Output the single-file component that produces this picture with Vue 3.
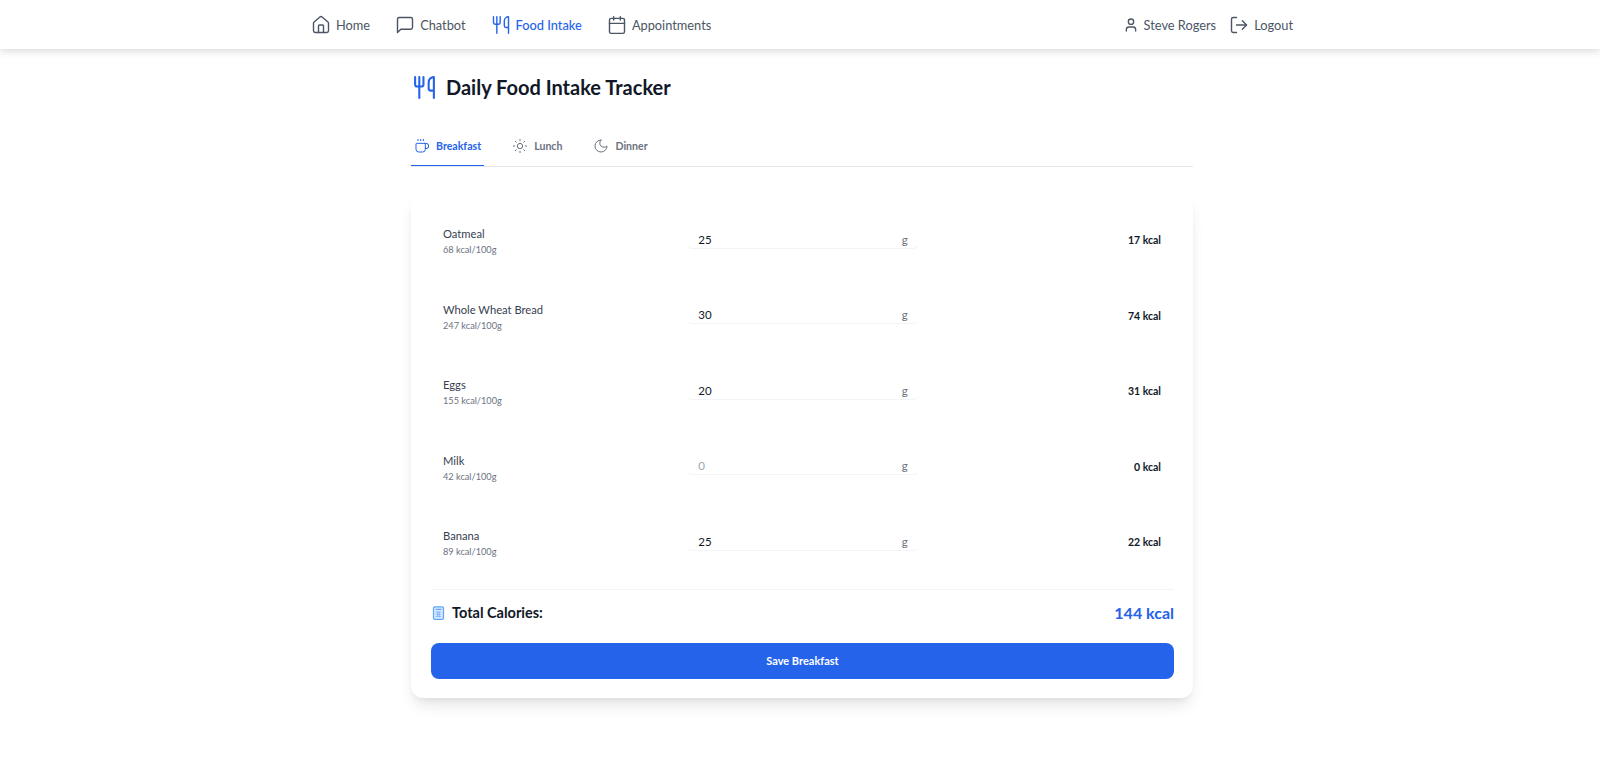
<template>
  <div class="page">
    <header class="navbar">
      <nav class="nav-inner">
        <div class="nav-links">
          <a v-for="link in links" :key="link.label" class="nav-link" :class="{ active: link.active }">
            <svg class="nav-icon" viewBox="0 0 24 24" fill="none" stroke="currentColor" stroke-width="2" stroke-linecap="round" stroke-linejoin="round">
              <path v-for="d in link.paths" :key="d" :d="d" />
            </svg>
            <span>{{ link.label }}</span>
          </a>
        </div>
        <div class="nav-user">
          <span class="user-name">
            <svg class="user-icon" viewBox="0 0 24 24" fill="none" stroke="currentColor" stroke-width="2" stroke-linecap="round" stroke-linejoin="round">
              <path d="M19 21v-2a4 4 0 0 0-4-4H9a4 4 0 0 0-4 4v2" />
              <circle cx="12" cy="7" r="4" />
            </svg>
            Steve Rogers
          </span>
          <a class="logout">
            <svg class="nav-icon" viewBox="0 0 24 24" fill="none" stroke="currentColor" stroke-width="2" stroke-linecap="round" stroke-linejoin="round">
              <path d="M9 21H5a2 2 0 0 1-2-2V5a2 2 0 0 1 2-2h4" />
              <path d="M16 17l5-5-5-5" />
              <path d="M21 12H9" />
            </svg>
            Logout
          </a>
        </div>
      </nav>
    </header>

    <main class="content">
      <div class="title-row">
        <svg class="title-icon" viewBox="0 0 24 24" fill="none" stroke="currentColor" stroke-width="2" stroke-linecap="round" stroke-linejoin="round">
          <path v-for="d in forkPaths" :key="d" :d="d" />
        </svg>
        <h1>Daily Food Intake Tracker</h1>
      </div>

      <div class="tabs">
        <button v-for="tab in tabs" :key="tab.label" type="button" class="tab" :class="{ active: tab.active }">
          <svg class="tab-icon" viewBox="0 0 24 24" fill="none" stroke="currentColor" stroke-width="2" stroke-linecap="round" stroke-linejoin="round">
            <path v-for="d in tab.paths" :key="d" :d="d" />
          </svg>
          {{ tab.label }}
        </button>
      </div>

      <section class="card">
        <div class="foods">
          <div v-for="food in foods" :key="food.name" class="food-row">
            <div class="food-info">
              <div class="food-name">{{ food.name }}</div>
              <div class="food-rate">{{ food.rate }} kcal/100g</div>
            </div>
            <div class="amount">
              <input class="amount-input" type="number" :value="food.grams" placeholder="0" />
              <span class="unit">g</span>
            </div>
            <div class="food-kcal">{{ kcal(food) }} kcal</div>
          </div>
        </div>

        <div class="total-row">
          <div class="total-label">
            <svg class="calc-icon" viewBox="0 0 24 24" fill="#dbeafe" stroke="currentColor" stroke-width="2" stroke-linecap="round" stroke-linejoin="round">
              <rect x="4" y="2" width="16" height="20" rx="2" />
              <path d="M8 6h8" fill="none" />
              <path d="M8 10.5h8M8 14h8M8 17.5h8M10.7 10.5v7M13.3 10.5v7" fill="none" stroke-width="1" />
            </svg>
            Total Calories:
          </div>
          <div class="total-value">144 kcal</div>
        </div>

        <button type="button" class="save">Save Breakfast</button>
      </section>
    </main>
  </div>
</template>

<script setup>
const forkPaths = [
  'M3 2v7c0 1.1.9 2 2 2h4a2 2 0 0 0 2-2V2',
  'M7 2v20',
  'M21 15V2a5 5 0 0 0-5 5v6c0 1.1.9 2 2 2h3Zm0 0v7',
]

const links = [
  { label: 'Home', paths: ['M15 21v-8a1 1 0 0 0-1-1h-4a1 1 0 0 0-1 1v8', 'M3 10a2 2 0 0 1 .709-1.528l7-5.999a2 2 0 0 1 2.582 0l7 5.999A2 2 0 0 1 21 10v9a2 2 0 0 1-2 2H5a2 2 0 0 1-2-2z'] },
  { label: 'Chatbot', paths: ['M21 15a2 2 0 0 1-2 2H7l-4 4V5a2 2 0 0 1 2-2h14a2 2 0 0 1 2 2z'] },
  { label: 'Food Intake', active: true, paths: forkPaths },
  { label: 'Appointments', paths: ['M8 2v4', 'M16 2v4', 'M5 4h14a2 2 0 0 1 2 2v14a2 2 0 0 1-2 2H5a2 2 0 0 1-2-2V6a2 2 0 0 1 2-2z', 'M3 10h18'] },
]

const tabs = [
  { label: 'Breakfast', active: true, paths: ['M10 2v2', 'M14 2v2', 'M6 2v2', 'M16 8a1 1 0 0 1 1 1v8a4 4 0 0 1-4 4H7a4 4 0 0 1-4-4V9a1 1 0 0 1 1-1h14a4 4 0 1 1 0 8h-1'] },
  { label: 'Lunch', paths: ['M12 8a4 4 0 1 0 0 8 4 4 0 0 0 0-8z', 'M12 2v2', 'M12 20v2', 'M4.93 4.93l1.41 1.41', 'M17.66 17.66l1.41 1.41', 'M2 12h2', 'M20 12h2', 'M6.34 17.66l-1.41 1.41', 'M19.07 4.93l-1.41 1.41'] },
  { label: 'Dinner', paths: ['M12 3a6 6 0 0 0 9 9 9 9 0 1 1-9-9Z'] },
]

const foods = [
  { name: 'Oatmeal', rate: 68, grams: 25 },
  { name: 'Whole Wheat Bread', rate: 247, grams: 30 },
  { name: 'Eggs', rate: 155, grams: 20 },
  { name: 'Milk', rate: 42, grams: null },
  { name: 'Banana', rate: 89, grams: 25 },
]

const kcal = (food) => Math.round((food.rate * (food.grams || 0)) / 100)
</script>

<style>
body {
  background: #fff;
}
</style>

<style scoped>
.page {
  min-height: 769px;
  background: #fff;
  font-family: Lato, "Noto Sans", sans-serif;
  color: #111827;
}

.navbar {
  height: 49px;
  background: #fff;
  box-shadow: 0 2px 8px rgba(0, 0, 0, 0.16);
}

.nav-inner {
  height: 100%;
  width: 982px;
  margin-left: 311px;
  display: flex;
  align-items: center;
  justify-content: space-between;
}

.nav-links,
.nav-user {
  display: flex;
  align-items: center;
}

.nav-links {
  gap: 25px;
}

.nav-user {
  gap: 13px;
}

.nav-link,
.user-name,
.logout {
  display: flex;
  align-items: center;
  gap: 5px;
  font-size: 12.8px;
  color: #4b5563;
}

.nav-link.active {
  color: #2563eb;
  font-weight: 500;
}

.nav-icon {
  width: 20px;
  height: 20px;
  stroke-width: 1.7;
}

.user-icon {
  width: 16px;
  height: 16px;
}

.content {
  width: 782px;
  margin-left: 411px;
}

.title-row {
  display: flex;
  align-items: center;
  gap: 9px;
  height: 76px;
}

.title-icon {
  width: 25px;
  height: 25px;
  color: #2563eb;
  margin: 1px 0 0 1px;
}

h1 {
  margin: 0;
  font-size: 20px;
  font-weight: 700;
  color: #111827;
}

.tabs {
  display: flex;
  height: 41px;
  border-bottom: 1px solid #e5e7eb;
}

.tab {
  display: flex;
  align-items: center;
  gap: 6px;
  padding: 2px 3px 0;
  margin-right: 25px;
  height: 41px;
  border: 0;
  border-bottom: 1px solid transparent;
  background: none;
  font-family: inherit;
  font-size: 10.6px;
  font-weight: 700;
  color: #6b7280;
}

.tab.active {
  color: #2563eb;
  border-bottom-color: #2563eb;
}

.tab-icon {
  width: 16px;
  height: 16px;
  stroke-width: 1.5;
}

.card {
  margin-top: 28px;
  padding: 9px 19px 19px 20px;
  background: #fff;
  border-radius: 12px;
  box-shadow: 0 10px 15px -3px rgba(0, 0, 0, 0.1), 0 4px 6px -2px rgba(0, 0, 0, 0.05);
}

.foods {
  display: flex;
  flex-direction: column;
}

.food-row {
  height: 75.5px;
  padding: 0 13px 0 12px;
  display: grid;
  grid-template-columns: 1fr 1fr 1fr;
  column-gap: 12px;
  align-items: center;
}

.food-name {
  font-size: 11.2px;
  line-height: 16px;
  color: #374151;
}

.food-rate {
  font-size: 9.2px;
  line-height: 15px;
  color: #6b7280;
}

.amount {
  position: relative;
  height: 16px;
  margin: -3px -1px 0 0;
  border-bottom: 1px solid #f3f4f6;
  border-radius: 6px;
}

.amount-input {
  display: block;
  width: 100%;
  height: 15px;
  padding: 0 12px;
  border: 0;
  outline: 0;
  background: transparent;
  font-family: inherit;
  font-size: 11.5px;
  color: #111827;
  appearance: textfield;
  box-sizing: border-box;
}

.amount-input::placeholder {
  color: #9ca3af;
}

.unit {
  position: absolute;
  right: 11px;
  top: 0;
  font-size: 11.5px;
  line-height: 15px;
  color: #6b7280;
}

.food-kcal {
  margin-top: -3px;
  text-align: right;
  font-size: 10.5px;
  font-weight: 700;
  color: #111827;
}

.total-row {
  margin-top: 7px;
  height: 54px;
  padding-bottom: 8px;
  box-sizing: border-box;
  border-top: 1px solid #f3f4f6;
  display: flex;
  align-items: center;
  justify-content: space-between;
}

.total-label {
  display: flex;
  align-items: center;
  gap: 6px;
  margin-top: 1px;
  font-size: 14.5px;
  font-weight: 700;
  color: #111827;
}

.calc-icon {
  width: 15px;
  height: 16px;
  color: #60a5fa;
}

.total-value {
  font-size: 16px;
  font-weight: 700;
  color: #2563eb;
}

.save {
  display: block;
  width: 100%;
  height: 36px;
  border: 0;
  border-radius: 8px;
  background: #2563eb;
  color: #fff;
  font-family: inherit;
  font-size: 11px;
  font-weight: 700;
}
</style>
